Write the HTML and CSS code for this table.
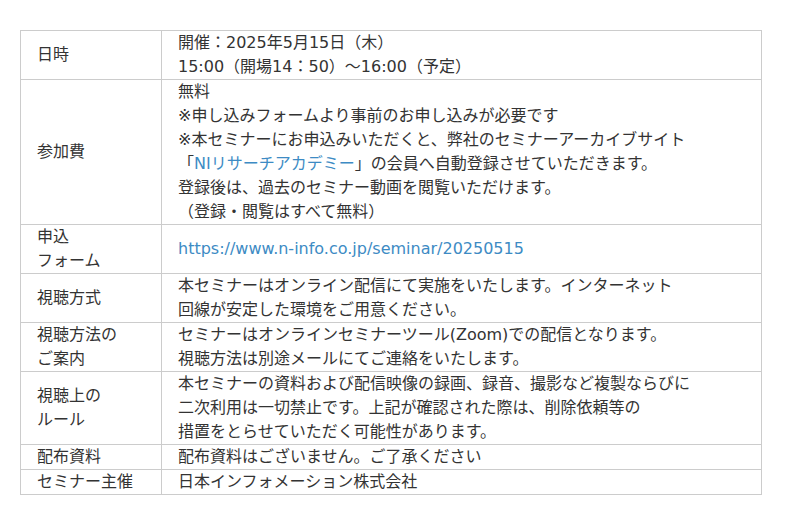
FILE: index.html
```html
<!DOCTYPE html>
<html lang="ja">
<head>
    <meta charset="UTF-8">
    <title>セミナー概要</title>
    <link rel="stylesheet" href="styles.css">
</head>
<body>
    <table class="outline">
        <tr>
            <th>日時</th>
            <td>開催：2025年5月15日（木）<br>15:00（開場14：50）～16:00（予定）</td>
        </tr>
        <tr>
            <th>参加費</th>
            <td>無料<br>※申し込みフォームより事前のお申し込みが必要です<br>※本セミナーにお申込みいただくと、弊社のセミナーアーカイブサイト<br>「<a href="#">NIリサーチアカデミー</a>」の会員へ自動登録させていただきます。<br>登録後は、過去のセミナー動画を閲覧いただけます。<br>（登録・閲覧はすべて無料）</td>
        </tr>
        <tr>
            <th>申込<br>フォーム</th>
            <td><a href="#">https://www.n-info.co.jp/seminar/20250515</a></td>
        </tr>
        <tr>
            <th>視聴方式</th>
            <td>本セミナーはオンライン配信にて実施をいたします。インターネット<br>回線が安定した環境をご用意ください。</td>
        </tr>
        <tr>
            <th>視聴方法の<br>ご案内</th>
            <td>セミナーはオンラインセミナーツール(Zoom)での配信となります。<br>視聴方法は別途メールにてご連絡をいたします。</td>
        </tr>
        <tr>
            <th>視聴上の<br>ルール</th>
            <td>本セミナーの資料および配信映像の録画、録音、撮影など複製ならびに<br>二次利用は一切禁止です。上記が確認された際は、削除依頼等の<br>措置をとらせていただく可能性があります。</td>
        </tr>
        <tr>
            <th>配布資料</th>
            <td>配布資料はございません。ご了承ください</td>
        </tr>
        <tr>
            <th>セミナー主催</th>
            <td>日本インフォメーション株式会社</td>
        </tr>
    </table>
</body>
</html>
```

FILE: styles.css
```css
body {
    margin: 0;
    padding: 30px 0 0 20px;
    background: #fff;
    color: #333;
    font-family: "DejaVu Sans", "Noto Sans CJK JP", sans-serif;
    font-size: 16px;
    line-height: 24px;
}

.outline {
    border-collapse: collapse;
    width: 742px;
}

.outline th,
.outline td {
    border: 1px solid #ccc;
    padding: 0 16px;
    vertical-align: middle;
    text-align: left;
    font-weight: normal;
}

.outline th {
    width: 108px;
}

.outline a {
    color: #3d8bc4;
    text-decoration: none;
}
```
